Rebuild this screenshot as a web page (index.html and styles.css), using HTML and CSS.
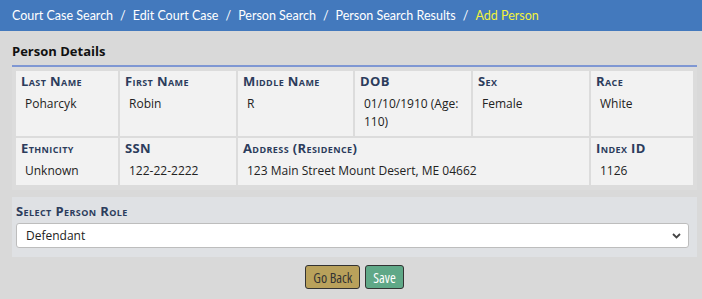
FILE: index.html
```html
<!DOCTYPE html>
<html lang="en">
<head>
  <meta charset="UTF-8" />
  <title>Add Person</title>
  <link rel="stylesheet" href="styles.css">
</head>
<body>
  <nav class="crumbs">
    <a href="#">Court Case Search</a><span class="sep">/</span>
    <a href="#">Edit Court Case</a><span class="sep">/</span>
    <a href="#">Person Search</a><span class="sep">/</span>
    <a href="#">Person Search Results</a><span class="sep">/</span>
    <span class="current">Add Person</span>
  </nav>

  <main class="page">
    <h2 class="section-title">Person Details</h2>
    <div class="details">
      <table class="detail-table">
        <colgroup>
          <col style="width:102px"><col style="width:116px"><col style="width:115px">
          <col style="width:116px"><col style="width:116px"><col style="width:102px">
        </colgroup>
        <tr class="row-top">
          <td><div class="label">Last Name</div><div class="value">Poharcyk</div></td>
          <td><div class="label">First Name</div><div class="value">Robin</div></td>
          <td><div class="label">Middle Name</div><div class="value">R</div></td>
          <td><div class="label">DOB</div><div class="value">01/10/1910 (Age: 110)</div></td>
          <td><div class="label">Sex</div><div class="value">Female</div></td>
          <td><div class="label">Race</div><div class="value">White</div></td>
        </tr>
        <tr>
          <td><div class="label">Ethnicity</div><div class="value">Unknown</div></td>
          <td><div class="label">SSN</div><div class="value">122-22-2222</div></td>
          <td colspan="3"><div class="label">Address (Residence)</div><div class="value">123 Main Street Mount Desert, ME 04662</div></td>
          <td><div class="label">Index ID</div><div class="value">1126</div></td>
        </tr>
      </table>
    </div>

    <div class="role-panel">
      <label class="label" for="role">Select Person Role</label>
      <div class="select-wrap">
        <select id="role">
          <option>Defendant</option>
          <option>Plaintiff</option>
          <option>Witness</option>
        </select>
        <svg class="chevron" width="9" height="6" viewBox="0 0 9 6"><path d="M1 1l3.5 3.5L8 1" fill="none" stroke="#444" stroke-width="1.8"/></svg>
      </div>
    </div>

    <div class="actions">
      <button class="btn btn-back">Go Back</button>
      <button class="btn btn-save">Save</button>
    </div>
  </main>
</body>
</html>
```

FILE: styles.css
```css
* { box-sizing: border-box; }
body {
  margin: 0;
  background: #d9d9d9;
  font-family: "Open Sans", "Noto Sans", sans-serif;
  color: #222;
}
/* Breadcrumb bar */
.crumbs {
  height: 31px;
  background: #4379bd;
  display: flex;
  align-items: center;
  padding: 0 12px;
  font-family: Lato, sans-serif;
  font-size: 12.5px;
  color: #fff;
}
.crumbs a {
  color: #fff;
  text-decoration: none;
}
.crumbs .sep {
  margin: 0 7px;
}
.crumbs .current {
  color: #f2f23c;
}
/* Page body */
.page {
  padding: 0 5px 0 12px;
}
.section-title {
  margin: 0;
  padding: 11px 0 5px;
  font-size: 13px;
  font-weight: 700;
  color: #111;
  border-bottom: 2px solid #7f97d3;
}
.details {
  background: #dcdcdc;
  padding: 2px 2px 3px;
}
.detail-table {
  width: 100%;
  table-layout: fixed;
  border-spacing: 2px;
}
.detail-table td {
  background: #f2f2f2;
  vertical-align: top;
  padding: 2px 5px 5px;
}
.label {
  display: block;
  font-family: "Open Sans", sans-serif;
  font-variant: small-caps;
  font-weight: 700;
  font-size: 13px;
  letter-spacing: 0.4px;
  line-height: 16px;
  color: #2c3c5c;
}
.value {
  margin-top: 6px;
  padding-left: 4px;
  font-size: 12px;
  line-height: 18px;
}
/* Role select */
.role-panel {
  margin-top: 7px;
  background: #dfe1e4;
  padding: 6px 8px 9px 4px;
}
.role-panel .label {
  margin-bottom: 4px;
}
.select-wrap {
  position: relative;
}
.select-wrap select {
  width: 100%;
  height: 25px;
  appearance: none;
  background: #fff;
  border: 1px solid #bdbdbd;
  border-radius: 3px;
  padding: 0 9px;
  font-family: "Open Sans", sans-serif;
  font-size: 12px;
  color: #222;
}
.chevron {
  position: absolute;
  right: 8px;
  top: 10px;
  pointer-events: none;
}
/* Buttons */
.actions {
  display: flex;
  justify-content: center;
  gap: 5px;
  margin-top: 8px;
}
.btn {
  height: 24px;
  padding: 0 7px;
  border: 1px solid #333;
  border-radius: 3px;
  font-family: "Open Sans", sans-serif;
  font-stretch: 75%;
  font-size: 14px;
  cursor: pointer;
}
.btn-back {
  background: #b9a15b;
  color: #333;
}
.btn-save {
  background: #5fa887;
  color: #fff;
}
```
